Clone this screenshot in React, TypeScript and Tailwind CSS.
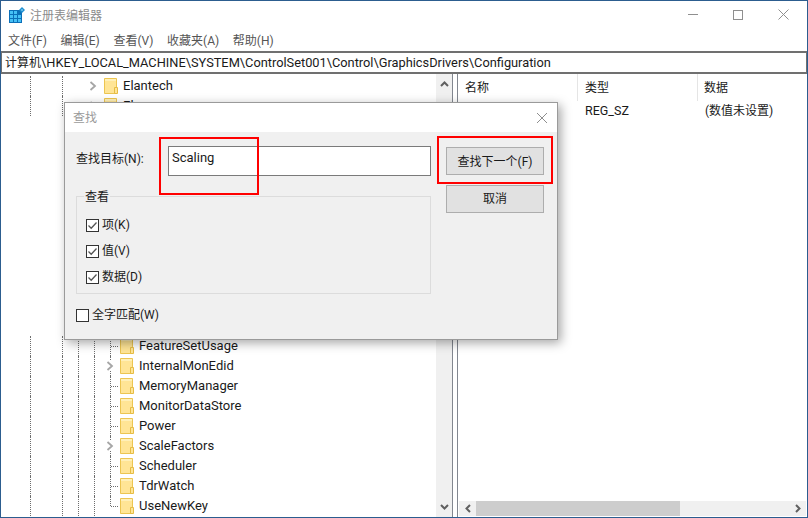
import React from 'react';

const FONT = 'Roboto, "Noto Sans CJK SC", sans-serif';

const Folder = () => (
  <svg width="14" height="16" viewBox="0 0 14 16" className="shrink-0">
    <path d="M0.5 0.5H12.5V15.5H0.5Z" fill="#ffe596" stroke="#ecc551" />
    <path d="M1 1H12V3H1Z" fill="#fff0b8" />
    <path d="M10.5 15.5V9.5H13.5V15.5Z" fill="#ffe596" stroke="#e6bc45" />
  </svg>
);

const Chevron = () => (
  <svg width="8" height="10" viewBox="0 0 8 10" className="shrink-0">
    <path d="M1.5 1L6 5L1.5 9" fill="none" stroke="#a6a6a6" strokeWidth="1.8" />
  </svg>
);

const Guide = ({ w }: { w: number }) => (
  <div className="h-full shrink-0 border-l border-dotted border-[#6d6d6d]" style={{ width: w }} />
);

const rows = [
  { name: 'FeatureSetUsage', arrow: false },
  { name: 'InternalMonEdid', arrow: true },
  { name: 'MemoryManager', arrow: false },
  { name: 'MonitorDataStore', arrow: false },
  { name: 'Power', arrow: false },
  { name: 'ScaleFactors', arrow: true },
  { name: 'Scheduler', arrow: false },
  { name: 'TdrWatch', arrow: false },
  { name: 'UseNewKey', arrow: false },
];

const TreeRow = ({ name, arrow, last }: { name: string; arrow: boolean; last: boolean }) => (
  <div className="flex h-5 items-center pl-[29px] text-[13px] text-[#1a1a1a]">
    <Guide w={32} />
    <Guide w={16} />
    <Guide w={16} />
    <Guide w={16} />
    <div className="relative flex h-full w-[10px] shrink-0 items-center">
      <div className={`w-full border-l border-dotted border-[#6d6d6d] ${last ? 'h-1/2 self-start' : 'h-full'}`} />
      {arrow ? (
        <div className="absolute left-[-4px] top-[5px] bg-white"><Chevron /></div>
      ) : (
        <div className="absolute left-[1px] top-[10px] w-[7px] border-t border-dotted border-[#6d6d6d]" />
      )}
    </div>
    <Folder />
    <span className="ml-[5px]">{name}</span>
  </div>
);

const TopRow = ({ name }: { name: string }) => (
  <div className="flex h-5 items-center pl-[29px] text-[13px] text-[#1a1a1a]">
    <Guide w={32} />
    <Guide w={16} />
    <div className="w-[11px]" />
    <Chevron />
    <div className="w-[7px]" />
    <Folder />
    <span className="ml-[5px]">{name}</span>
  </div>
);

const Check = ({ label, checked }: { label: string; checked?: boolean }) => (
  <div className="flex h-[14px] items-center gap-[3px] text-[12px] text-[#1a1a1a]">
    <div className="flex h-[13px] w-[13px] items-center justify-center border border-[#333] bg-white">
      {checked && (
        <svg width="11" height="11" viewBox="0 0 11 11">
          <path d="M1.5 5.5L4.2 8.2L9.5 2.5" fill="none" stroke="#555" strokeWidth="1.3" />
        </svg>
      )}
    </div>
    <span>{label}</span>
  </div>
);

const FindDialog = () => (
  <div className="absolute left-[63px] top-[101px] flex h-[238px] w-[494px] flex-col border border-[#9a9a9a] bg-[#f0f0f0] shadow-[3px_3px_10px_rgba(0,0,0,0.35)]">
    <div className="flex h-[29px] items-center justify-between bg-white pl-[8px] pr-[9px] text-[12px] text-[#9a9a9a]">
      <span>查找</span>
      <svg width="12" height="12" viewBox="0 0 12 12">
        <path d="M1 1L11 11M11 1L1 11" stroke="#8e8e8e" strokeWidth="1" />
      </svg>
    </div>
    <div className="flex pl-[11px] pt-[14px] text-[12px] text-[#1a1a1a]">
      <div className="flex h-[25px] w-[92px] items-center">查找目标(N):</div>
      <div className="h-[30px] w-[263px] border border-[#7a7a7a] bg-white pl-[3px] text-[13px] leading-[22px]">Scaling</div>
      <div className="ml-[15px] mt-px flex w-[98px] flex-col gap-[10px]">
        <div className="flex h-[28px] items-center justify-center border border-[#adadad] bg-[#e1e1e1] pt-px">查找下一个(F)</div>
        <div className="flex h-[28px] items-center justify-center border border-[#adadad] bg-[#e1e1e1]">取消</div>
      </div>
    </div>
    <div className="relative ml-[11px] mt-[-17px] h-[98px] w-[355px] border border-[#dcdcdc]">
      <span className="absolute left-[7px] top-[-9px] bg-[#f0f0f0] px-[1px] text-[12px] leading-[18px] text-[#1a1a1a]">查看</span>
      <div className="flex flex-col gap-[12px] pl-[9px] pt-[21px]">
        <Check label="项(K)" checked />
        <Check label="值(V)" checked />
        <Check label="数据(D)" checked />
      </div>
    </div>
    <div className="pl-[11px] pt-[14px]">
      <Check label="全字匹配(W)" />
    </div>
  </div>
);

export default function App() {
  return (
    <div
      className="relative flex h-[518px] w-[808px] flex-col overflow-hidden border border-[#2c5d8f] bg-white"
      style={{ fontFamily: FONT }}
    >
      <div className="flex h-[29px] shrink-0 items-center pl-[8px] text-[12px] text-[#8c8c8c]">
        <svg width="16" height="17" viewBox="0 0 16 17" className="shrink-0">
          <path d="M0 3H13V16H0Z" fill="#0b6fb8" />
          <path d="M1 4H4V7H1ZM5 4H8V7H5ZM1 8H4V11H1ZM5 8H8V11H5ZM9 8H12V11H9ZM1 12H4V15H1ZM5 12H8V15H5ZM9 12H12V15H9Z" fill="#45c0f5" />
          <path d="M13 0L16 3L13 6L10 3Z" fill="#1d8fd0" />
          <path d="M13 2L14 3L13 4L12 3Z" fill="#9fdcf8" />
        </svg>
        <span className="ml-[5px]">注册表编辑器</span>
        <div className="ml-auto flex items-center gap-[35px] pb-[2px] pr-[18px]">
          <div className="h-px w-[10px] bg-[#8f8f8f]" />
          <div className="h-[10px] w-[10px] border border-[#8f8f8f]" />
          <svg width="11" height="11" viewBox="0 0 11 11">
            <path d="M0.5 0.5L10.5 10.5M10.5 0.5L0.5 10.5" stroke="#8f8f8f" strokeWidth="1" />
          </svg>
        </div>
      </div>
      <div className="flex h-[21px] shrink-0 items-center gap-[13.7px] pl-[7px] pt-px text-[12px] text-[#555]">
        <span>文件(F)</span>
        <span>编辑(E)</span>
        <span>查看(V)</span>
        <span>收藏夹(A)</span>
        <span>帮助(H)</span>
      </div>
      <div className="flex h-[23px] shrink-0 items-center overflow-hidden border-x border-b-2 border-t-2 border-[#707070] pl-[3px] text-[12.8px] text-[#1a1a1a]">
        <span className="text-[12px]">计算机</span>\HKEY_LOCAL_MACHINE\SYSTEM\ControlSet001\Control\GraphicsDrivers\Configuration
      </div>
      <div className="flex min-h-0 flex-1">
        <div className="flex w-[452px] shrink-0 border-r border-[#828790]">
          <div className="flex min-w-0 flex-1 flex-col pt-[2px]">
            <TopRow name="Elantech" />
            <TopRow name="El" />
            <div className="h-[220px] shrink-0" />
            {rows.map((r, i) => (
              <TreeRow key={r.name} name={r.name} arrow={r.arrow} last={i === rows.length - 1} />
            ))}
          </div>
          <div className="flex w-[16px] shrink-0 flex-col items-center justify-between bg-[#f0f0f0] py-[7px] text-[#606060]">
            <svg width="9" height="6" viewBox="0 0 9 6">
              <path d="M1 5L4.5 1.5L8 5" fill="none" stroke="#606060" strokeWidth="2" />
            </svg>
            <svg width="9" height="6" viewBox="0 0 9 6">
              <path d="M1 1L4.5 4.5L8 1" fill="none" stroke="#606060" strokeWidth="2" />
            </svg>
          </div>
        </div>
        <div className="ml-[4px] flex min-w-0 flex-1 flex-col border-l border-[#828790] text-[12px] text-[#1a1a1a]">
          <div className="flex h-[27px] shrink-0 items-center">
            <div className="flex h-full w-[120px] items-center border-r border-[#e5e5e5] pl-[7px]">名称</div>
            <div className="flex h-full w-[120px] items-center border-r border-[#e5e5e5] pl-[7px]">类型</div>
            <div className="pl-[6px]">数据</div>
          </div>
          <div className="flex h-[20px] shrink-0 items-center">
            <div className="w-[120px]" />
            <div className="w-[120px] pl-[7px] text-[12.5px]">REG_SZ</div>
            <div className="pl-[7px]">(数值未设置)</div>
          </div>
          <div className="flex-1" />
          <div className="mx-[1px] mb-[1px] flex h-[15px] shrink-0 items-center bg-[#f0f0f0]">
            <div className="flex w-[17px] justify-center">
              <svg width="6" height="9" viewBox="0 0 6 9"><path d="M5 1L1.5 4.5L5 8" fill="none" stroke="#606060" strokeWidth="2" /></svg>
            </div>
            <div className="h-full w-[204px] bg-[#cdcdcd]" />
            <div className="ml-auto flex w-[17px] justify-center">
              <svg width="6" height="9" viewBox="0 0 6 9"><path d="M1 1L4.5 4.5L1 8" fill="none" stroke="#606060" strokeWidth="2" /></svg>
            </div>
          </div>
        </div>
      </div>
      <FindDialog />
      <div className="absolute left-[158px] top-[136px] h-[58px] w-[100px] border-2 border-[#ff0000]" />
      <div className="absolute left-[436px] top-[135px] h-[48px] w-[116px] border-2 border-[#ff0000]" />
    </div>
  );
}
